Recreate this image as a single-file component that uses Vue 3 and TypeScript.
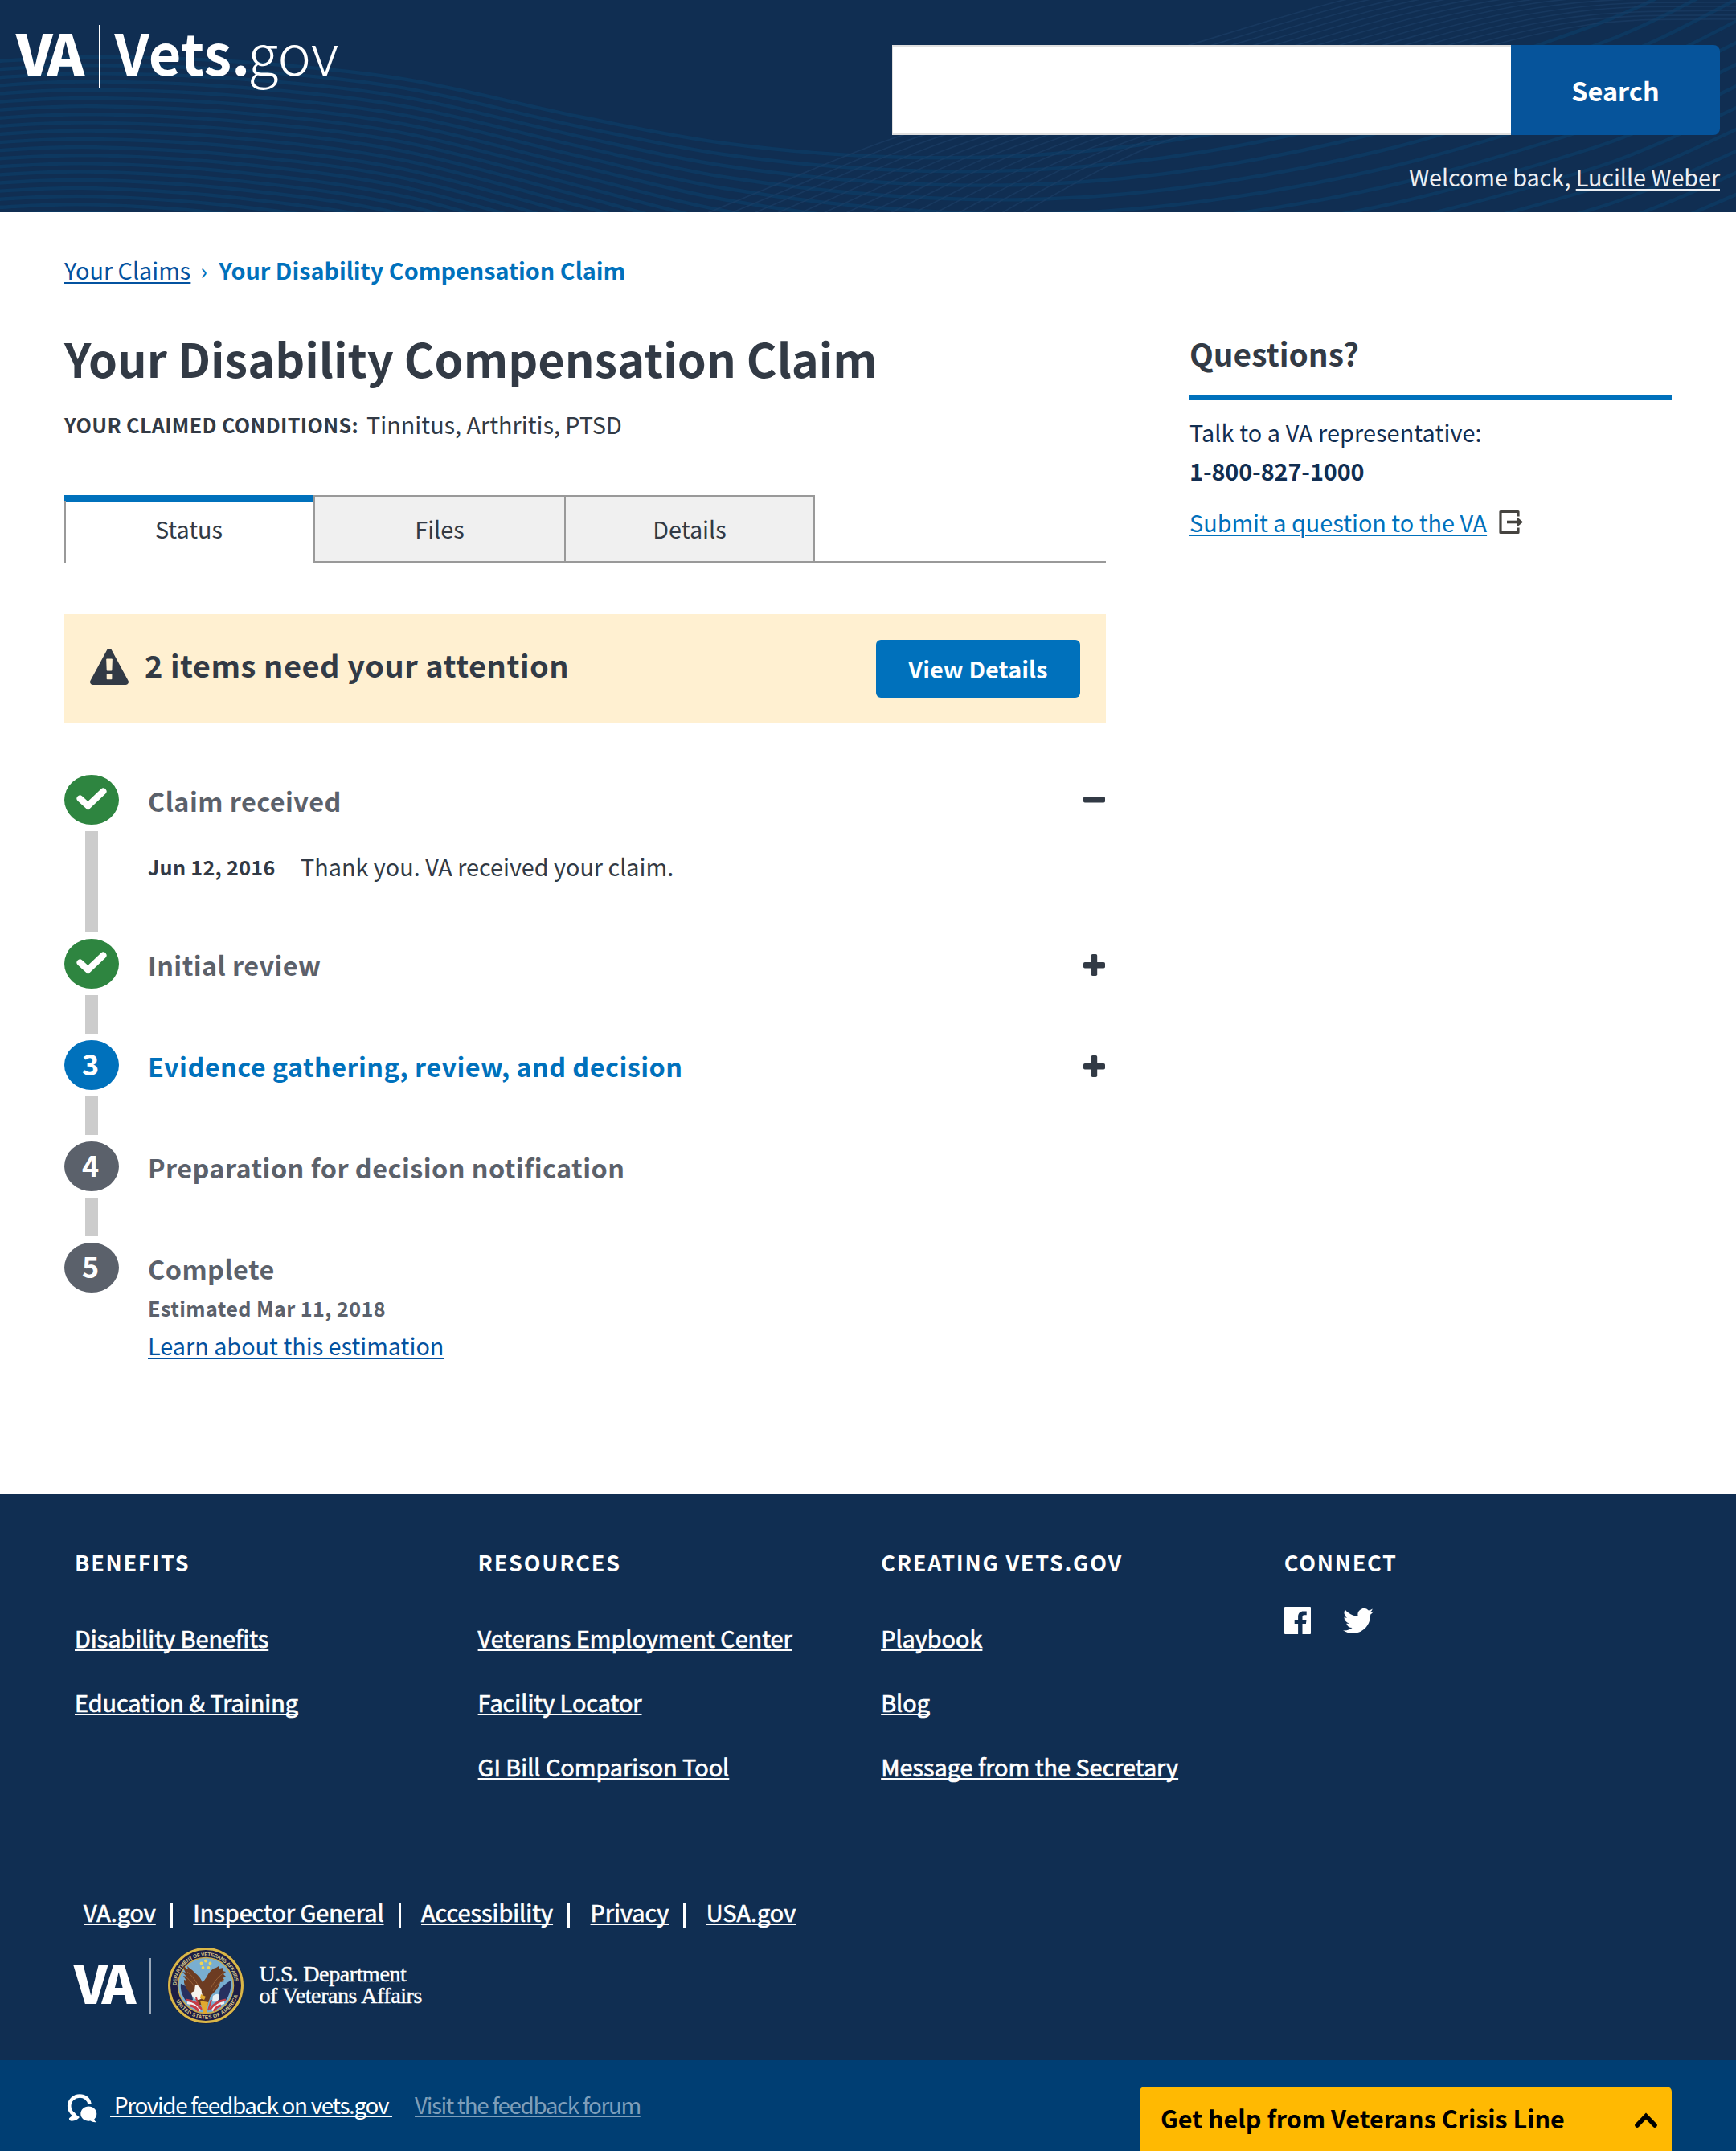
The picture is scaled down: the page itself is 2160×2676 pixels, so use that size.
<script setup lang="ts">
type Point = [number, number]

interface Step {
  title: string
  marker: string
  tone: 'done' | 'current' | 'pending'
  toggle?: 'open' | 'closed'
}

const steps: Step[] = [
  { title: 'Claim received', marker: '', tone: 'done', toggle: 'open' },
  { title: 'Initial review', marker: '', tone: 'done', toggle: 'closed' },
  { title: 'Evidence gathering, review, and decision', marker: '3', tone: 'current', toggle: 'closed' },
  { title: 'Preparation for decision notification', marker: '4', tone: 'pending' },
  { title: 'Complete', marker: '5', tone: 'pending' },
]

const tabs = ['Status', 'Files', 'Details']

const footerColumns = [
  { title: 'Benefits', links: ['Disability Benefits', 'Education & Training'] },
  { title: 'Resources', links: ['Veterans Employment Center', 'Facility Locator', 'GI Bill Comparison Tool'] },
  { title: 'Creating Vets.gov', links: ['Playbook', 'Blog', 'Message from the Secretary'] },
]

const legalLinks = ['VA.gov', 'Inspector General', 'Accessibility', 'Privacy', 'USA.gov']

// Smooth curve through the points (Catmull-Rom converted to cubic Béziers)
function curve(points: Point[]): string {
  const n = points.length
  let d = `M${points[0][0]} ${points[0][1]}`
  for (let i = 0; i < n - 1; i++) {
    const p0 = points[Math.max(i - 1, 0)]
    const p1 = points[i]
    const p2 = points[i + 1]
    const p3 = points[Math.min(i + 2, n - 1)]
    const c1 = [p1[0] + (p2[0] - p0[0]) / 6, p1[1] + (p2[1] - p0[1]) / 6]
    const c2 = [p2[0] - (p3[0] - p1[0]) / 6, p2[1] - (p3[1] - p1[1]) / 6]
    d += ` C${c1.map(v => v.toFixed(1))} ${c2.map(v => v.toFixed(1))} ${p2}`
  }
  return d
}

const broadWaves = Array.from({ length: 34 }, (_, i) =>
  curve([
    [-120, 88 + 10 * i],
    [0, 76 + 10.1 * i],
    [120, 71 + 10.2 * i],
    [300, 77 + 10.6 * i],
    [500, 98 + 11.2 * i],
    [720, 145 + 12.3 * i],
    [900, 178 + 14 * i],
    [1100, 195 + 16 * i],
    [1300, 192 + 18.5 * i],
    [1500, 168 + 20.5 * i],
    [1720, 118 + 23 * i],
    [1937, 48 + 25 * i],
    [2065, -4 + 26 * i],
    [2260, -110 + 28 * i],
  ]),
)

const fineStart: Point[] = [[820, 290], [960, 232], [1100, 176], [1290, 116], [1480, 56], [1672, 0], [1840, -34], [2000, -48], [2200, -50]]
const fineEnd: Point[] = [[1200, 310], [1293, 253], [1380, 206], [1473, 168], [1690, 106], [1858, 56], [1950, 35], [2040, 25], [2200, 24]]
const fineWaves = Array.from({ length: 15 }, (_, i) => {
  const t = i / 14
  return curve(fineStart.map((p, k): Point => [
    Math.round(p[0] + (fineEnd[k][0] - p[0]) * t),
    Math.round(p[1] + (fineEnd[k][1] - p[1]) * t),
  ]))
})
</script>

<template>
  <div class="page">
    <header class="header">
      <svg class="waves" viewBox="0 0 2160 264" width="2160" height="264" fill="none" aria-hidden="true">
        <g stroke="#0d3a63" stroke-width="4.4" opacity=".85"><path v-for="(d, i) in broadWaves" :key="i" :d="d" /></g>
        <g stroke="#1d4068" stroke-width="1.7" opacity=".6"><path v-for="(d, i) in fineWaves" :key="i" :d="d" /></g>
      </svg>
      <a class="logo">
        <svg width="88" height="80" viewBox="0 0 88 80" aria-label="VA">
          <text class="va-mark" x="0 38.5" y="63.500" font-size="71">VA</text>
        </svg>
        <span class="logo-rule"></span>
        <span class="wordmark"><b>Vets.</b><span>gov</span></span>
      </a>
      <div class="header-tools">
        <form class="search">
          <input class="search-input" type="text" aria-label="Search" />
          <button class="search-button" type="button">Search</button>
        </form>
        <p class="welcome">Welcome back, <a>Lucille Weber</a></p>
      </div>
    </header>

    <main class="main">
      <nav class="breadcrumb">
        <a>Your Claims</a><span class="sep">›</span><strong>Your Disability Compensation Claim</strong>
      </nav>
      <div class="columns">
        <section class="claim">
          <h1>Your Disability Compensation Claim</h1>
          <p class="conditions"><b>YOUR CLAIMED CONDITIONS:</b><span>Tinnitus, Arthritis, PTSD</span></p>

          <div class="tabs">
            <a v-for="(tab, i) in tabs" :key="tab" class="tab" :class="{ active: i === 0 }">{{ tab }}</a>
            <span class="tab-fill"></span>
          </div>

          <div class="alert">
            <svg class="alert-icon" width="48" height="46" viewBox="0 0 48 46">
              <path fill="#323a45" fill-rule="evenodd" d="M24 0c1.300 0 2.500.700 3.100 1.900l20.400 37.800c.6 1.100.6 2.400-.05 3.500A3.400 3.400 0 0 1 44.500 45H3.500a3.400 3.400 0 0 1-2.950-1.800c-.65-1.100-.65-2.400-.05-3.500L20.900 1.900C21.500.7 22.700 0 24 0zM20.200 13.200l.5 13.600c0 .4.400.7.900.7h4.900c.5 0 .9-.3.900-.7l.5-13.600c0-.4-.4-.7-.9-.7h-5.900c-.5 0-.9.300-.9.700zM20.700 31.700v5.700c0 .5.400.8.800.8h5.100c.4 0 .8-.3.800-.8v-5.700c0-.5-.4-.8-.8-.8h-5.100c-.4 0-.8.300-.8.800z" />
            </svg>
            <h2>2 items need your attention</h2>
            <button type="button">View Details</button>
          </div>

          <ol class="timeline">
            <li v-for="(step, i) in steps" :key="step.title" class="step" :class="step.tone">
              <div class="track">
                <span class="marker">
                  <svg v-if="step.tone === 'done'" width="38" height="30" viewBox="0 0 38 30">
                    <path d="M4.500 14.500 14.500 23.500 33.500 5.500" fill="none" stroke="#fff" stroke-width="8" stroke-linejoin="miter" stroke-linecap="round" />
                  </svg>
                  <template v-else>{{ step.marker }}</template>
                </span>
                <span v-if="i < steps.length - 1" class="line"></span>
              </div>
              <div class="body">
                <div class="head">
                  <h3>{{ step.title }}</h3>
                  <svg v-if="step.toggle" class="toggle" width="28" height="28" viewBox="0 0 28 28">
                    <rect x="0" y="10" width="27" height="7.500" rx="1.800" fill="#323a45" />
                    <rect v-if="step.toggle === 'closed'" x="9.700" y="0" width="7.500" height="27" rx="1.800" fill="#323a45" />
                  </svg>
                </div>
                <p v-if="i === 0" class="event"><b>Jun 12, 2016</b><span>Thank you. VA received your claim.</span></p>
                <template v-if="i === 4">
                  <p class="estimate">Estimated Mar 11, 2018</p>
                  <p class="learn"><a>Learn about this estimation</a></p>
                </template>
              </div>
            </li>
          </ol>
        </section>

        <aside class="questions">
          <h2>Questions?</h2>
          <p class="talk">Talk to a VA representative:<br /><b>1-800-827-1000</b></p>
          <p class="ask">
            <a>Submit a question to the VA</a>
            <svg width="32" height="32" viewBox="0 0 32 32">
              <path d="M24 8.500V2.500H2v26h22v-6" fill="none" stroke="#45433f" stroke-width="3.200" stroke-linejoin="round" />
              <path d="M10 15.500h14" stroke="#45433f" stroke-width="3.600" />
              <path d="M22.500 9.200 30 15.500l-7.500 6.300z" fill="#45433f" />
            </svg>
          </p>
        </aside>
      </div>
    </main>

    <footer class="footer">
      <div class="footer-columns">
        <div v-for="col in footerColumns" :key="col.title" class="footer-column">
          <h4>{{ col.title }}</h4>
          <ul><li v-for="link in col.links" :key="link"><a>{{ link }}</a></li></ul>
        </div>
        <div class="footer-column">
          <h4>Connect</h4>
          <div class="social">
            <svg width="33" height="34" viewBox="0 0 33 34">
              <path fill="#fff" fill-rule="evenodd" d="M1 0h31a1 1 0 0 1 1 1v32a1 1 0 0 1-1 1H22.500V21h4.400l.7-5.100h-5.100v-3.200c0-1.500.4-2.500 2.500-2.500h2.700V5.600c-.5-.1-2.100-.2-4-.2-3.900 0-6.600 2.400-6.600 6.800v3.700h-4.400V21h4.400v13H1a1 1 0 0 1-1-1V1a1 1 0 0 1 1-1z" />
            </svg>
            <svg width="38" height="34" viewBox="0 0 24 20.500">
              <path fill="#fff" d="M23.950 3.070a10 10 0 0 1-2.820.77 4.960 4.960 0 0 0 2.160-2.720c-.95.560-2 .960-3.130 1.190A4.920 4.920 0 0 0 11.780 6.800C7.690 6.600 4.070 4.630 1.640 1.660a4.920 4.920 0 0 0 1.520 6.570 4.900 4.900 0 0 1-2.230-.620v.06a4.920 4.920 0 0 0 3.950 4.830 4.900 4.900 0 0 1-2.210.08 4.940 4.940 0 0 0 4.600 3.420A9.870 9.870 0 0 1 0 18.040 13.950 13.950 0 0 0 7.550 20.250c9.050 0 14-7.500 14-13.990 0-.21 0-.42-.02-.63a9.940 9.940 0 0 0 2.460-2.550z" />
            </svg>
          </div>
        </div>
      </div>

      <nav class="legal"><a v-for="link in legalLinks" :key="link">{{ link }}</a></nav>

      <div class="department">
        <svg class="dept-va" width="80" height="60" viewBox="0 0 80 60" aria-label="VA">
          <text class="va-mark" x="0 34.5" y="54" font-size="65">VA</text>
        </svg>
        <span class="dept-rule"></span>
        <svg class="seal" width="96" height="96" viewBox="0 0 96 96">
          <defs>
            <path id="seal-top" d="M11.500 48a36.500 36.500 0 0 1 73 0" />
            <path id="seal-bottom" d="M6.500 52a41.700 41.700 0 0 0 83 0" />
          </defs>
          <circle cx="48" cy="48" r="47.500" fill="#1b1b3c" />
          <circle cx="48" cy="48" r="45.500" fill="#1c1d45" stroke="#d9b748" stroke-width="3" />
          <circle cx="48" cy="48" r="34.500" fill="#79aed0" stroke="#c9a94a" stroke-width="1.500" />
          <text class="seal-text" textLength="110"><textPath href="#seal-top" textLength="110">DEPARTMENT OF VETERANS AFFAIRS</textPath></text>
          <text class="seal-text" textLength="98"><textPath href="#seal-bottom" startOffset="16" textLength="98">UNITED STATES OF AMERICA</textPath></text>
          <g fill="#f0d552">
            <circle cx="48" cy="17.500" r="1.900" /><circle cx="42.500" cy="20.500" r="1.900" /><circle cx="53.500" cy="20.500" r="1.900" />
            <circle cx="44.500" cy="26" r="1.900" /><circle cx="51.500" cy="26" r="1.900" />
          </g>
          <path fill="#27305f" d="M17 46c4 1 8 5 13 8l2 12-8 2c-5-6-8-14-7-22zM79 42c-5 3-9 6-13 10l-3 15 9 1c6-8 8-17 7-26z" />
          <g stroke-width="3" fill="none">
            <path stroke="#c63b45" d="M23 66c8 1 16 5 20 12M73 66c-8 1-15 5-20 12" />
            <path stroke="#f3eeee" d="M25 69.500c7 1 12 4 16 10M71 69.500c-7 1-11 4-15 10" />
            <path stroke="#c63b45" d="M29 73c5 1 8 3 10 7M67 73c-5 1-7 3-9 7" />
          </g>
          <path fill="#6d3c22" d="M20 23c2 3 4 4 6 5l-1-4c3 3 6 4 9 8 4 3 7 6 10 12 3-3 5-6 7-10 3-4 5-7 10-8l3-2 1 3 5-1-1 4 4 1-3 3 3 3-4 2 2 4-5 1c-2 8-8 13-12 17l-4 12-10-1-7-10C25 55 20 47 21 41l3 1-4-6 4 1-5-6 4 1c-2-3-3-6-3-9z" />
          <path stroke="#9a6339" stroke-width="1" fill="none" d="M25 31c5 4 10 10 14 18M24 38c5 4 8 8 12 15M71 32c-6 4-12 10-17 20M71 40c-6 4-10 8-14 15" />
          <path fill="#f5f3ee" d="M35 47c5 1 8 5 8 10 2 5 0 9-5 9-5-1-8-5-8-9l4-2z" />
          <path fill="#e8f0f4" d="M57 61c5-3 7-3 8 1 0 5-4 7-9 6z" />
          <path fill="#e2a92e" d="M42 59l6 3-2 4-5-2zM41 67l10 2-2 14h-4z" />
          <path stroke="#c63b45" stroke-width="2" d="M36 63l4 14M55 66l-4 13" />
        </svg>
        <span class="dept-name"><span>U.S. Department</span><span>of Veterans Affairs</span></span>
      </div>
    </footer>

    <div class="feedback-bar">
      <div class="feedback">
        <svg width="38" height="36" viewBox="0 0 38 36">
          <path d="M28.500 12.500C27.500 6.200 22.300 2.500 16.300 2.500 9 2.500 3.200 8 3.200 15c0 4.600 2.300 8.300 5.600 10.500.3 2.500-1.300 4.600-3.600 5.800 4 .3 7-1.200 9-3.700" fill="none" stroke="#fff" stroke-width="4.600" stroke-linejoin="round" />
          <path fill="#fff" d="M27.300 15.500c5.600 0 10 4.200 10 9.300 0 2.700-1.200 5-3 6.600.2 2 1.300 3 3 3.700-3 .6-5.700-.1-7.600-1.500-6.800 1-12.400-3-12.400-8.800 0-5.100 4.400-9.300 10-9.300z" />
        </svg>
        <a class="provide">&nbsp;Provide feedback on vets.gov&nbsp;</a>
        <a class="forum">Visit the feedback forum</a>
      </div>
      <button class="crisis" type="button">
        <span>Get help from Veterans Crisis Line</span>
        <svg width="28" height="20" viewBox="0 0 28 20"><path d="M3 16 14 4.500 25 16" fill="none" stroke="#000" stroke-width="5.600" stroke-linecap="round" /></svg>
      </button>
    </div>
  </div>
</template>

<style>
html, body { margin: 0; background: #fff; }
</style>

<style scoped>
.page {
  width: 2160px;
  height: 2676px;
  overflow: hidden;
  font-family: 'Noto Sans CJK SC', 'Noto Sans', sans-serif;
  font-size: 28.8px;
  line-height: 40px;
  color: #323a45;
}
h1, h2, h3, h4, p, ul, ol { margin: 0; padding: 0; list-style: none; }
svg { display: block; flex: none; }
button { font: inherit; border: 0; }
a { text-decoration: underline; text-decoration-thickness: 2px; text-underline-offset: 3px; }

.header {
  position: relative;
  display: flex;
  justify-content: space-between;
  height: 264px;
  background: #102e52;
  color: #fff;
}
.waves { position: absolute; inset: 0; }
.logo { position: relative; display: flex; align-items: flex-start; padding: 31px 0 0 20px; text-decoration: none; }
.logo svg, .dept-va { overflow: visible; }
.va-mark { font-family: 'Noto Sans CJK SC', sans-serif; font-weight: 900; fill: #fff; }
.logo-rule { width: 1.5px; height: 78px; margin: 0 18px 0 15px; background: #fff; }
.wordmark { display: flex; font-size: 70px; line-height: 66px; white-space: nowrap; }
.wordmark b { letter-spacing: .2px; }
.wordmark span { font-weight: 300; margin-left: -3px; letter-spacing: 0; }
.header-tools { position: relative; padding: 56px 20px 0 0; }
.search { display: flex; height: 112px; }
.search-input {
  box-sizing: border-box;
  width: 770px;
  height: 112px;
  padding: 0 20px;
  border: solid #dfdfdf;
  border-width: 2px 0 2px 1px;
  border-radius: 0;
  background: #fff;
}
.search-button {
  width: 260px;
  padding: 0;
  border-radius: 0 8px 8px 0;
  background: #06549b;
  color: #fff;
  font-size: 32.4px;
  font-weight: 700;
}
.welcome { margin-top: 32px; text-align: right; color: #eceff3; letter-spacing: -.08px; }

.main { height: 1595px; padding: 52px 80px 0; box-sizing: border-box; }
.breadcrumb { display: flex; color: #0071bc; }
.breadcrumb a, .learn a { color: #0352a0; }
.breadcrumb .sep { margin: 0 15px 0 12px; width: 8px; }
.columns { display: grid; grid-template-columns: 1296px 600px; column-gap: 104px; }
h1 { margin-top: 53px; font-size: 57.6px; line-height: 72px; white-space: nowrap; }
.conditions { display: flex; margin-top: 27px; }
.conditions b { font-size: 25.2px; letter-spacing: .35px; margin-right: 10px; }

.tabs { display: flex; height: 84px; margin-top: 68px; }
.tab {
  box-sizing: border-box;
  width: 310px;
  padding-top: 20px;
  border: solid #999;
  border-width: 2px 2px 2px 0;
  background: #f0f0f0;
  text-align: center;
  text-decoration: none;
}
.tab.active {
  padding: 22px 2px 0 0;
  border-width: 0 0 0 2px;
  border-image: linear-gradient(#0071bc 8px, #999 8px) 1;
  background: linear-gradient(#0071bc 8px, #fff 8px);
}
.tab.active + .tab { width: 314px; border-left-width: 2px; }
.tab-fill { flex: 1; border-bottom: 2px solid #999; }

.alert { display: flex; align-items: flex-start; box-sizing: border-box; height: 136px; margin-top: 64px; padding: 32px; background: #fff0d1; }
.alert-icon { margin-top: 11px; }
.alert h2 { margin: 7px 0 0 20px; font-size: 38px; line-height: 48px; letter-spacing: .5px; }
.alert button { width: 254px; height: 72px; margin-left: auto; padding: 0; border-radius: 6px; background: #0071bc; color: #fff; font-weight: 700; font-size: 28.8px; letter-spacing: .1px; }

.timeline { margin-top: 64px; }
.step { display: flex; min-height: 126px; }
.step:first-child { min-height: 204px; }
.track { display: flex; flex-direction: column; align-items: center; width: 68px; margin-right: 36px; }
.marker {
  display: flex;
  justify-content: center;
  align-items: center;
  box-sizing: border-box;
  width: 68px;
  height: 62px;
  padding: 0 3px 6px 0;
  border-radius: 34px / 31px;
  color: #fff;
  font-size: 36px;
  font-weight: 700;
  line-height: 56px;
}
.done .marker { background: #2e8540; padding: 0 0 2px; }
.current .marker { background: #0071bc; }
.pending .marker { background: #5b616b; }
.line { flex: 1; width: 16px; margin: 8px 0; background: #ccc; }
.body { flex: 1; }
.head { display: flex; justify-content: space-between; padding-top: 10px; }
h3 { color: #5b616b; font-size: 32.4px; line-height: 44px; letter-spacing: .45px; }
.current h3 { color: #0071bc; }
.toggle { margin-top: 9px; }
.step:first-child .toggle { margin-top: 7px; }
.event { display: flex; margin-top: 40px; }
.event b { width: 190px; font-size: 25.2px; letter-spacing: .28px; }
.estimate { margin-top: 7px; color: #5b616b; font-size: 25.2px; font-weight: 700; letter-spacing: .4px; }
.learn { margin-top: 7px; }

.questions { padding-top: 59px; color: #112e51; }
.questions h2 { padding-bottom: 29px; border-bottom: 6px solid #0071bc; color: #323a45; font-size: 38.8px; line-height: 48px; }
.talk { margin-top: 16px; line-height: 48px; letter-spacing: .1px; }
.talk b { letter-spacing: -.1px; }
.ask { display: flex; margin-top: 20px; gap: 15px; color: #0071bc; }
.ask svg { margin-top: 4px; }

.footer { height: 704px; box-sizing: border-box; padding: 65px 60px 0 93px; background: #102e52; color: #fff; }
.footer a { text-decoration-skip-ink: none; text-underline-offset: 2px; -webkit-text-stroke: .7px #fff; white-space: nowrap; }
.footer-columns { display: grid; grid-template-columns: repeat(4, 501.6px); height: 435px; }
h4 { font-size: 27px; letter-spacing: 1.75px; text-transform: uppercase; }
.footer-column ul { display: flex; flex-direction: column; gap: 40px; margin-top: 54px; }
.social { display: flex; gap: 40px; margin-top: 35px; }
.legal { display: flex; padding-left: 11px; }
.legal a + a { position: relative; margin-left: 46.5px; }
.legal a + a::before { content: ''; position: absolute; left: -28.5px; top: 8px; width: 3px; height: 32px; background: #fff; }
.department { display: flex; align-items: flex-start; margin-top: 23px; }
.dept-va { margin: 17px 14px 0 -1px; }
.dept-rule { width: 1.5px; height: 70px; margin: 14px 20px 0 0; background: #9aa8b9; }
.dept-name { display: flex; flex-direction: column; margin: 20px 0 0 19px; font-family: 'Liberation Serif', serif; font-size: 28px; line-height: 27px; -webkit-text-stroke: .4px #fff; }
.dept-name span { letter-spacing: -.4px; white-space: nowrap; }
.dept-name span + span { letter-spacing: -.42px; }
.seal-text { font-family: 'Liberation Sans', sans-serif; font-size: 6.5px; font-weight: 700; fill: #d9c98c; }

.feedback-bar { display: flex; justify-content: space-between; height: 113px; background: #003e73; }
.feedback { display: flex; padding: 35px 0 0 83px; font-size: 27.8px; color: #fff; }
.feedback svg { margin-top: 7px; }
.feedback a { text-decoration-skip-ink: none; text-underline-offset: 2px; white-space: nowrap; }
.provide { margin-left: 16px; letter-spacing: -1.3px; }
.forum { margin-left: 28px; color: #7e9eba; letter-spacing: -1.38px; }
.crisis {
  display: flex;
  justify-content: space-between;
  align-items: flex-start;
  width: 662px;
  height: 80px;
  margin: 33px 80px 0 0;
  padding: 19px 18px 0 26px;
  border-radius: 6px 6px 0 0;
  background: #ffb902;
  color: #000;
  font-size: 30.5px;
  font-weight: 700;
}
.crisis svg { margin-top: 13px; }
</style>
